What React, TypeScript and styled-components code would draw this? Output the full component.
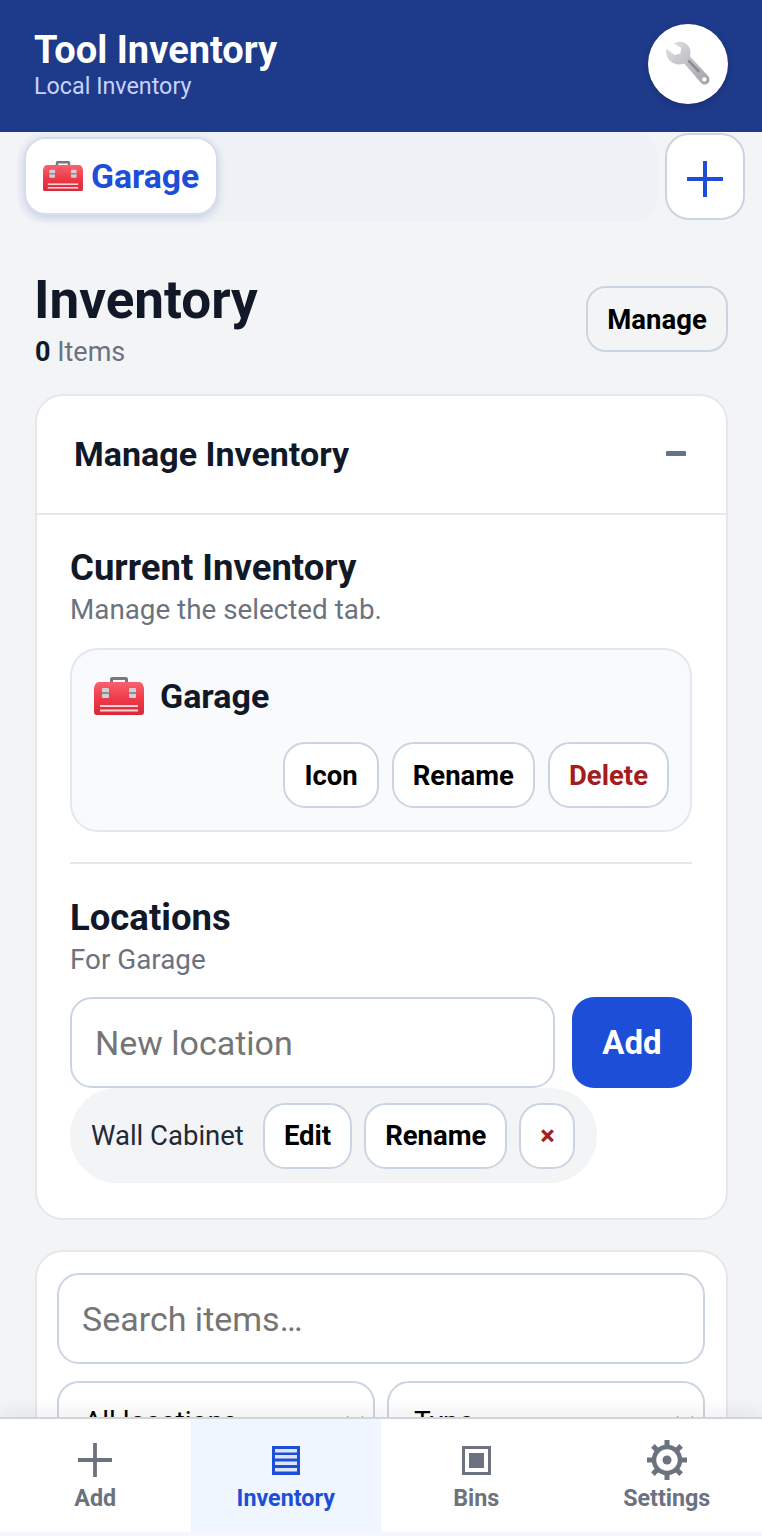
import React from "react";
import styled, { createGlobalStyle } from "styled-components";

const GlobalStyle = createGlobalStyle`
  html, body {
    margin: 0;
    padding: 0;
    background: #f3f4f6;
    font-family: Roboto, "Liberation Sans", sans-serif;
  }
  * { box-sizing: border-box; }
`;

function ToolboxIcon({ width }: { width: number }) {
  return (
    <svg width={width} height={width * 0.76} viewBox="0 0 50 38" aria-hidden="true">
      <defs>
        <linearGradient id="boxBody" x1="0" y1="0" x2="0" y2="1">
          <stop offset="0" stopColor="#f9626e" />
          <stop offset="0.5" stopColor="#ee3b4a" />
          <stop offset="1" stopColor="#d8283a" />
        </linearGradient>
      </defs>
      <path d="M16 6V2c0-1 1-2 2-2h14c1 0 2 1 2 2v4h-3V3H19v3z" fill="#77777d" />
      <path d="M5 5h40c2 0 3 1 4 3l1 3v24c0 2-1 3-3 3H3c-2 0-3-1-3-3V11l1-3c1-2 2-3 4-3z" fill="url(#boxBody)" />
      <rect x="8" y="11" width="7" height="10" rx="1" fill="#cfcfd4" />
      <rect x="35" y="11" width="7" height="10" rx="1" fill="#cfcfd4" />
      <rect x="8" y="15" width="7" height="2" fill="#8e8e94" />
      <rect x="35" y="15" width="7" height="2" fill="#8e8e94" />
      <rect x="6" y="28" width="38" height="2" fill="#fbd0d3" />
      <rect x="6" y="32.500" width="38" height="2" fill="#fbd0d3" />
    </svg>
  );
}

function WrenchIcon() {
  return (
    <svg width="46" height="46" viewBox="0 0 48 48" aria-hidden="true">
      <defs>
        <linearGradient id="wrenchMetal" x1="0" y1="0" x2="1" y2="1">
          <stop offset="0" stopColor="#e2e2e6" />
          <stop offset="0.45" stopColor="#c2c2c8" />
          <stop offset="1" stopColor="#a2a2a9" />
        </linearGradient>
      </defs>
      <path
        d="M9 2.500C14-.5 21 .5 24.500 5.500c2.500 3.500 2.500 7.500 1.500 10.500l19 20.500c2 2.500 2 5.500 0 7.500s-5.500 2-7.500-.5L20 23.500C15 25.500 9 24.500 5 20.500 1.500 17 .5 12.500 1.500 8l8.500 6.500 6-1.500 1-6z"
        fill="url(#wrenchMetal)"
      />
      <path d="M25 21l10 10.500" stroke="#8a8a92" strokeWidth="2.500" strokeLinecap="round" />
      <circle cx="41" cy="40" r="2.300" fill="#fff" />
    </svg>
  );
}

function PlusIcon({ size, color }: { size: number; color: string }) {
  return (
    <svg width={size} height={size} viewBox="0 0 36 36" aria-hidden="true">
      <path d="M18 0v36M0 18h36" stroke={color} strokeWidth="4" />
    </svg>
  );
}

function ListIcon() {
  return (
    <svg width="28" height="29" viewBox="0 0 28 29" aria-hidden="true">
      <rect width="28" height="29" fill="#1d4ed8" />
      <rect x="3" y="3" width="22" height="3.500" fill="#dbe6fa" />
      <rect x="3" y="9" width="22" height="3.500" fill="#dbe6fa" />
      <rect x="3" y="15.500" width="22" height="3.500" fill="#dbe6fa" />
      <rect x="3" y="22" width="22" height="3.500" fill="#dbe6fa" />
    </svg>
  );
}

function BinsIcon() {
  return (
    <svg width="29" height="29" viewBox="0 0 29 29" aria-hidden="true">
      <rect x="1.500" y="1.500" width="26" height="26" fill="none" stroke="#6b7280" strokeWidth="3" />
      <rect x="7" y="7" width="15" height="15" fill="#6b7280" />
    </svg>
  );
}

function GearIcon() {
  const teeth = [0, 45, 90, 135, 180, 225, 270, 315];
  return (
    <svg width="40" height="40" viewBox="0 0 40 40" aria-hidden="true">
      {teeth.map((angle) => (
        <rect key={angle} x="17.500" y="0" width="5" height="8" fill="#6b7280" transform={`rotate(${angle} 20 20)`} />
      ))}
      <circle cx="20" cy="20" r="13" fill="none" stroke="#6b7280" strokeWidth="4.500" />
      <circle cx="20" cy="20" r="4.500" fill="#6b7280" />
    </svg>
  );
}

function SelectChevron() {
  return (
    <svg width="18" height="10" viewBox="0 0 18 10" aria-hidden="true">
      <path d="M1 1l8 8 8-8" fill="none" stroke="#222" strokeWidth="2" />
    </svg>
  );
}

export default function App() {
  return (
    <>
      <GlobalStyle />
      <Shell>
        <Header>
          <div>
            <AppTitle>Tool Inventory</AppTitle>
            <AppSubtitle>Local Inventory</AppSubtitle>
          </div>
          <AppBadge>
            <WrenchIcon />
          </AppBadge>
        </Header>

        <TabRow>
          <TabStrip>
            <ActiveTab>
              <ToolboxIcon width={40} />
              Garage
            </ActiveTab>
          </TabStrip>
          <AddTabButton aria-label="Add inventory">
            <PlusIcon size={36} color="#1d4ed8" />
          </AddTabButton>
        </TabRow>

        <Main>
          <TitleRow>
            <div>
              <PageTitle>Inventory</PageTitle>
              <ItemCount>
                <strong>0</strong> Items
              </ItemCount>
            </div>
            <ManageButton>Manage</ManageButton>
          </TitleRow>

          <Card>
            <CardHeader>
              <CardHeading>Manage Inventory</CardHeading>
              <Collapse />
            </CardHeader>
            <CardBody>
              <SectionTitle>Current Inventory</SectionTitle>
              <SectionHint>Manage the selected tab.</SectionHint>
              <CurrentBox>
                <CurrentName>
                  <ToolboxIcon width={50} />
                  Garage
                </CurrentName>
                <CurrentActions>
                  <SmallButton>Icon</SmallButton>
                  <SmallButton>Rename</SmallButton>
                  <SmallButton $danger>Delete</SmallButton>
                </CurrentActions>
              </CurrentBox>
              <Divider />
              <SectionTitle>Locations</SectionTitle>
              <SectionHint>For Garage</SectionHint>
              <AddLocationRow>
                <TextField placeholder="New location" />
                <PrimaryButton>Add</PrimaryButton>
              </AddLocationRow>
              <LocationChip>
                <LocationName>Wall Cabinet</LocationName>
                <SmallButton>Edit</SmallButton>
                <SmallButton>Rename</SmallButton>
                <ChipClose aria-label="Remove">×</ChipClose>
              </LocationChip>
            </CardBody>
          </Card>

          <FilterCard>
            <TextField placeholder="Search items…" />
            <SelectRow>
              <FakeSelect>
                All locations
                <SelectChevron />
              </FakeSelect>
              <FakeSelect>
                Type
                <SelectChevron />
              </FakeSelect>
            </SelectRow>
          </FilterCard>
        </Main>

        <BottomNav>
          <NavItem>
            <NavIcon>
              <PlusIcon size={34} color="#6b7280" />
            </NavIcon>
            Add
          </NavItem>
          <NavItem $active>
            <NavIcon>
              <ListIcon />
            </NavIcon>
            Inventory
          </NavItem>
          <NavItem>
            <NavIcon>
              <BinsIcon />
            </NavIcon>
            Bins
          </NavItem>
          <NavItem>
            <NavIcon>
              <GearIcon />
            </NavIcon>
            Settings
          </NavItem>
        </BottomNav>
      </Shell>
    </>
  );
}

const Shell = styled.div`
  display: flex;
  flex-direction: column;
  height: 100vh;
  overflow: hidden;
  background: #f3f4f6;
`;

const Header = styled.header`
  flex: none;
  display: flex;
  justify-content: space-between;
  align-items: center;
  height: 132px;
  padding: 0 34px 4px 34px;
  background: #1e3a8a;
  color: #fff;
`;

const AppTitle = styled.div`
  font-size: 38px;
  font-weight: 700;
  line-height: 44px;
`;

const AppSubtitle = styled.div`
  font-size: 23.300px;
  line-height: 28px;
  color: #c7d2fe;
`;

const AppBadge = styled.div`
  display: flex;
  align-items: center;
  justify-content: center;
  width: 80px;
  height: 80px;
  border-radius: 50%;
  background: #fff;
  box-shadow: 0 2px 6px rgba(0, 0, 0, 0.2);
`;

const TabRow = styled.div`
  flex: none;
  display: flex;
  gap: 8px;
  height: 90px;
  padding: 0 17px 0 18px;
`;

const TabStrip = styled.div`
  flex: 1;
  display: flex;
  align-items: flex-start;
  padding: 5px 6px;
  border-radius: 24px;
  background: #eef1f5;
`;

const ActiveTab = styled.button`
  display: flex;
  align-items: center;
  gap: 8px;
  width: 194px;
  height: 78px;
  padding: 0 0 0 17px;
  border: 2px solid #d5ddf0;
  border-radius: 22px;
  background: #fff;
  box-shadow: 0 3px 8px rgba(30, 58, 138, 0.18);
  color: #1d4ed8;
  font: 700 33.700px Roboto, sans-serif;
`;

const AddTabButton = styled.button`
  display: flex;
  align-items: center;
  justify-content: center;
  width: 80px;
  height: 87px;
  margin-top: 1px;
  padding: 5px 0 0;
  border: 2px solid #cbd5e1;
  border-radius: 24px;
  background: #fff;
`;

const Main = styled.main`
  flex: 1;
  min-height: 0;
  overflow: hidden;
  padding: 46px 34px 0 35px;
`;

const TitleRow = styled.div`
  display: flex;
  justify-content: space-between;
  align-items: center;
  margin-bottom: 22px;
`;

const PageTitle = styled.h1`
  margin: 0 0 0 -1px;
  font-size: 53px;
  font-weight: 700;
  line-height: 64px;
  color: #111827;
`;

const ItemCount = styled.div`
  font-size: 27px;
  line-height: 40px;
  color: #6b7280;

  strong {
    color: #111827;
  }
`;

const ManageButton = styled.button`
  width: 142px;
  height: 66px;
  margin-bottom: 2px;
  border: 2px solid #cbd5e1;
  border-radius: 20px;
  background: #f3f4f6;
  color: #000;
  font: 700 27.500px Roboto, sans-serif;
`;

const Card = styled.section`
  border: 2px solid #e5e7eb;
  border-radius: 28px;
  background: #fff;
`;

const CardHeader = styled.div`
  display: flex;
  justify-content: space-between;
  align-items: center;
  height: 119px;
  padding: 0 40px 2px 37px;
  border-bottom: 2px solid #e5e7eb;
`;

const CardHeading = styled.h2`
  margin: 0;
  font-size: 34px;
  font-weight: 700;
  color: #111827;
`;

const Collapse = styled.span`
  width: 20px;
  height: 5px;
  border-radius: 1px;
  background: #64748b;
`;

const CardBody = styled.div`
  padding: 31px 34px 35px 33px;
`;

const SectionTitle = styled.h3`
  margin: 0;
  font-size: 36.500px;
  font-weight: 700;
  line-height: 44px;
  color: #111827;
`;

const SectionHint = styled.p`
  margin: 2px 0 0;
  font-size: 27.800px;
  line-height: 36px;
  color: #6b7280;
`;

const CurrentBox = styled.div`
  margin-top: 20px;
  height: 184px;
  padding: 26px 21px 22px 22px;
  border: 2px solid #e2e8f0;
  border-radius: 28px;
  background: #f8fafc;
`;

const CurrentName = styled.div`
  display: flex;
  align-items: center;
  gap: 16px;
  font-size: 34px;
  font-weight: 700;
  color: #111827;
`;

const CurrentActions = styled.div`
  display: flex;
  justify-content: flex-end;
  gap: 13px;
  margin-top: 26px;
`;

const SmallButton = styled.button<{ $danger?: boolean }>`
  height: 66px;
  padding: 0 19px;
  border: 2px solid #cbd5e1;
  border-radius: 22px;
  background: #fff;
  color: ${(p) => (p.$danger ? "#a51c1c" : "#000")};
  font: 700 27.500px Roboto, sans-serif;
`;

const Divider = styled.hr`
  margin: 30px 0 32px;
  border: 0;
  border-top: 2px solid #e5e7eb;
`;

const AddLocationRow = styled.div`
  display: flex;
  gap: 17px;
  margin-top: 19px;
`;

const TextField = styled.input`
  flex: 1;
  min-width: 0;
  width: 100%;
  height: 91px;
  padding: 0 23px;
  border: 2px solid #cbd5e1;
  border-radius: 22px;
  background: #fff;
  color: #111827;
  font: 400 34px Roboto, sans-serif;

  &::placeholder {
    color: #757575;
    opacity: 1;
  }
`;

const PrimaryButton = styled.button`
  flex: none;
  width: 120px;
  height: 91px;
  border: 0;
  border-radius: 22px;
  background: #1d4ed8;
  color: #fff;
  font: 700 33px Roboto, sans-serif;
`;

const LocationChip = styled.div`
  display: inline-flex;
  align-items: center;
  gap: 12px;
  height: 95px;
  padding: 0 22px 0 21px;
  border-radius: 48px;
  background: #f3f4f6;
  vertical-align: top;
`;

const LocationName = styled.span`
  margin-right: 7px;
  font-size: 27.500px;
  color: #1f2937;
`;

const ChipClose = styled(SmallButton)`
  width: 56px;
  padding: 0;
  color: #a51c1c;
`;

const FilterCard = styled.section`
  margin-top: 30px;
  padding: 21px 21px 21px 20px;
  border: 2px solid #e5e7eb;
  border-radius: 28px;
  background: #fff;
`;

const SelectRow = styled.div`
  display: grid;
  grid-template-columns: 1fr 1fr;
  gap: 12px;
  margin-top: 17px;
`;

const FakeSelect = styled.div`
  display: flex;
  justify-content: space-between;
  align-items: center;
  height: 80px;
  padding: 0 9px 0 25px;
  border: 2px solid #cbd5e1;
  border-radius: 22px;
  background: #fff;
  color: #000;
  font-size: 28px;
`;

const BottomNav = styled.nav`
  flex: none;
  position: relative;
  display: grid;
  grid-template-columns: repeat(4, 1fr);
  height: 119px;
  padding-bottom: 4px;
  border-top: 2px solid #d1d5db;
  background: linear-gradient(#fff 113px, #f5f7fd 113px);
  box-shadow: 0 -8px 14px rgba(0, 0, 0, 0.05);
`;

const NavItem = styled.div<{ $active?: boolean }>`
  display: flex;
  flex-direction: column;
  align-items: center;
  background: ${(p) => (p.$active ? "#eff6ff" : "transparent")};
  color: ${(p) => (p.$active ? "#1d4ed8" : "#6b7280")};
  font-size: 23.300px;
  font-weight: 700;
`;

const NavIcon = styled.span`
  display: flex;
  align-items: center;
  justify-content: center;
  height: 40px;
  margin: 21px 0 4px;
`;
